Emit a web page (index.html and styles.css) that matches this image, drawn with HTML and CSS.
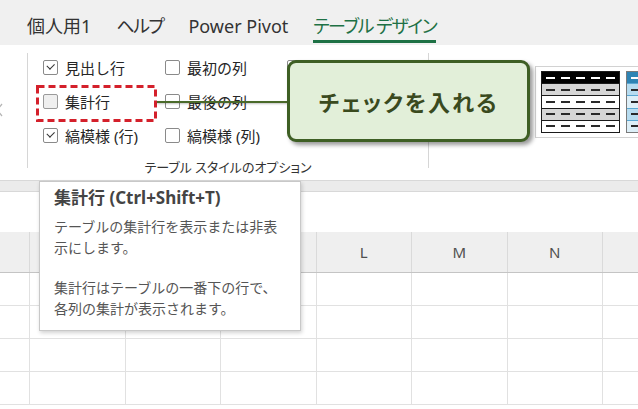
FILE: index.html
```html
<!DOCTYPE html>
<html lang="ja">
<head>
  <meta charset="UTF-8" />
  <title>テーブル デザイン - 集計行</title>
  <link rel="stylesheet" href="styles.css">
</head>
<body>
  <div class="page">

    <!-- Ribbon tabs -->
    <div class="tabbar">
      <span class="tab">個人用1</span>
      <span class="tab kana">ヘルプ</span>
      <span class="tab">Power Pivot</span>
      <span class="tab kana active">テーブル デザイン</span>
    </div>

    <!-- Ribbon body -->
    <div class="ribbon">
      <div class="scroll-left">
        <svg width="8" height="14" viewBox="0 0 8 14"><path d="M6 1 L1 7 L6 13" fill="none" stroke="#b5b5b5" stroke-width="1.3"/></svg>
      </div>
      <div class="sep"></div>

      <div class="group">
        <div class="options">
          <label class="opt"><span class="box checked"></span>見出し行</label>
          <label class="opt"><span class="box"></span>最初の列</label>
          <label class="opt"><span class="box checked"></span></label>
          <label class="opt"><span class="box hover"></span>集計行</label>
          <label class="opt"><span class="box"></span>最後の列</label>
          <label class="opt"></label>
          <label class="opt"><span class="box checked"></span>縞模様 (行)</label>
          <label class="opt"><span class="box"></span>縞模様 (列)</label>
          <label class="opt"></label>
        </div>
        <div class="group-label">テーブル スタイルのオプション</div>
      </div>
      <div class="sep"></div>

      <div class="gallery">
        <div class="gallery-frame">
          <div class="thumb dark">
            <div class="trow head"></div>
            <div class="trow band"></div>
            <div class="trow"></div>
            <div class="trow band"></div>
            <div class="trow"></div>
          </div>
          <div class="thumb blue">
            <div class="trow head"></div>
            <div class="trow band"></div>
            <div class="trow"></div>
            <div class="trow band"></div>
            <div class="trow"></div>
          </div>
        </div>
      </div>
    </div>

    <!-- Sheet -->
    <div class="ribbon-edge"></div>
    <div class="formula-bar"></div>
    <div class="sheet">
      <div class="srow colhead">
        <div class="cell corner"></div>
        <div class="cell"></div>
        <div class="cell"></div>
        <div class="cell"></div>
        <div class="cell">L</div>
        <div class="cell">M</div>
        <div class="cell">N</div>
        <div class="cell"></div>
      </div>
      <div class="srow"><div class="cell rh"></div><div class="cell"></div><div class="cell"></div><div class="cell"></div><div class="cell"></div><div class="cell"></div><div class="cell"></div><div class="cell"></div></div>
      <div class="srow"><div class="cell rh"></div><div class="cell"></div><div class="cell"></div><div class="cell"></div><div class="cell"></div><div class="cell"></div><div class="cell"></div><div class="cell"></div></div>
      <div class="srow"><div class="cell rh"></div><div class="cell"></div><div class="cell"></div><div class="cell"></div><div class="cell"></div><div class="cell"></div><div class="cell"></div><div class="cell"></div></div>
      <div class="srow"><div class="cell rh"></div><div class="cell"></div><div class="cell"></div><div class="cell"></div><div class="cell"></div><div class="cell"></div><div class="cell"></div><div class="cell"></div></div>
    </div>

    <!-- Overlays -->
    <svg class="highlight" width="121" height="37" viewBox="0 0 121 37">
      <rect x="1.5" y="1.5" width="118" height="34" fill="none" stroke="#d4202b" stroke-width="3" stroke-dasharray="7 4"/>
    </svg>
    <div class="connector"></div>
    <div class="callout">チェックを入れる</div>

    <div class="tooltip">
      <div class="tip-title">集計行 (Ctrl+Shift+T)</div>
      <p>テーブルの集計行を表示または非表<br>示にします。</p>
      <p>集計行はテーブルの一番下の行で、<br>各列の集計が表示されます。</p>
    </div>

  </div>
</body>
</html>
```

FILE: styles.css
```css
* {
  box-sizing: border-box;
  margin: 0;
  padding: 0;
}

body {
  width: 638px;
  height: 409px;
  overflow: hidden;
  background: #fff;
  font-family: 'Noto Sans', 'Noto Sans CJK JP', sans-serif;
  font-feature-settings: "palt";
  color: #262626;
}

.page {
  position: relative;
  width: 638px;
  height: 409px;
  overflow: hidden;
}

/* Tabs */
.tabbar {
  height: 45px;
  background: #f0f0f0;
  display: flex;
  align-items: flex-start;
  gap: 25px;
  padding-left: 27px;
  white-space: nowrap;
}

.tab {
  font-size: 18px;
  line-height: 24px;
  padding-top: 14px;
  padding-bottom: 2px;
  border-bottom: 3px solid transparent;
  color: #333;
}

.tab.kana {
  letter-spacing: -1.5px;
}

.tab.active {
  color: #1e7145;
  border-bottom-color: #1e7145;
}

/* Ribbon */
.ribbon {
  height: 135px;
  display: flex;
  background: #fff;
}

.scroll-left {
  width: 27px;
  flex: none;
  display: flex;
  align-items: center;
  padding-bottom: 6px;
  margin-left: -4px;
}

.sep {
  width: 1px;
  flex: none;
  background: #d6d6d6;
  margin: 8px 0 12px 4px;
}

.group + .sep {
  margin-left: 0;
}

.group {
  width: 400px;
  flex: none;
  padding-top: 5px;
}

.options {
  display: grid;
  grid-template-columns: repeat(3, 122px);
  grid-auto-rows: 34px;
  padding-left: 15px;
}

.opt {
  display: flex;
  align-items: center;
  gap: 7px;
  font-size: 15px;
  white-space: nowrap;
  font-feature-settings: normal;
}

.box {
  width: 15px;
  height: 15px;
  flex: none;
  border: 1px solid #8a8a8a;
  border-radius: 2px;
  background: #fff;
  position: relative;
}

.box.hover {
  background: #efefef;
  border-color: #9a9a9a;
}

.box.checked::after {
  content: '';
  position: absolute;
  left: 3px;
  top: 2px;
  width: 6px;
  height: 3.5px;
  border-left: 1.5px solid #333;
  border-bottom: 1.5px solid #333;
  transform: rotate(-45deg);
}

.group-label {
  margin-top: 6px;
  text-align: center;
  font-size: 13px;
  line-height: 18px;
  color: #333;
}

/* Table style gallery */
.gallery {
  flex: 1;
  min-width: 0;
  overflow: hidden;
  padding: 21px 0 0 106px;
}

.gallery-frame {
  height: 72px;
  border: 1px solid #d2d2d2;
  border-right: none;
  display: flex;
  gap: 6px;
  padding: 4px 0 0 5px;
}

.thumb {
  width: 79px;
  height: 62px;
  flex: none;
  border: 1px solid #1a1a1a;
  display: flex;
  flex-direction: column;
}

.trow {
  flex: 1;
  border-top: 1px solid #1a1a1a;
  background: repeating-linear-gradient(90deg, #2a2a2a 0 9px, transparent 9px 15px) center / calc(100% - 8px) 2px no-repeat, #fff;
}

.trow.band {
  background: repeating-linear-gradient(90deg, #2a2a2a 0 9px, transparent 9px 15px) center / calc(100% - 8px) 2px no-repeat, #d6d6d6;
}

.trow.head {
  border-top: none;
  background: repeating-linear-gradient(90deg, #fff 0 9px, transparent 9px 15px) center / calc(100% - 8px) 2px no-repeat, #000;
}

.thumb.blue {
  border-color: #7a7a7a;
}

.thumb.blue .trow {
  border-top-color: #5aa7d2;
  background: repeating-linear-gradient(90deg, #2a2a2a 0 9px, transparent 9px 15px) center / calc(100% - 8px) 2px no-repeat, #ddeff8;
}

.thumb.blue .trow.band {
  background: repeating-linear-gradient(90deg, #2a2a2a 0 9px, transparent 9px 15px) center / calc(100% - 8px) 2px no-repeat, #b7dcf0;
}

.thumb.blue .trow.head {
  background: repeating-linear-gradient(90deg, #fff 0 9px, transparent 9px 15px) center / calc(100% - 8px) 2px no-repeat, #2f84b4;
}

/* Sheet */
.ribbon-edge {
  height: 12px;
  background: #ebebeb;
  border-top: 1px solid #d8d8d8;
  border-bottom: 1px solid #d8d8d8;
}

.formula-bar {
  height: 40px;
  background: #fff;
}

.srow {
  display: grid;
  grid-template-columns: 30px repeat(7, 95.5px);
  height: 33px;
  border-bottom: 1px solid #e1e1e1;
}

.cell {
  border-right: 1px solid #e1e1e1;
}

.srow.colhead {
  height: 41px;
  background: #efefef;
  border-bottom: 1px solid #c4c4c4;
}

.colhead .cell {
  display: flex;
  align-items: center;
  justify-content: center;
  font-size: 15px;
  color: #505050;
  border-right-color: #dadada;
}

/* Overlays */
.highlight {
  position: absolute;
  left: 36px;
  top: 85px;
}

.connector {
  position: absolute;
  left: 157px;
  top: 101px;
  width: 131px;
  height: 2px;
  background: #4a6a2a;
  box-shadow: 0 1px 2px rgba(0, 0, 0, 0.25);
}

.callout {
  position: absolute;
  left: 287px;
  top: 60px;
  width: 243px;
  height: 82px;
  border: 3px solid #3e5f24;
  border-radius: 9px;
  background: #e2efd9;
  box-shadow: 3px 3px 4px rgba(0, 0, 0, 0.4);
  display: flex;
  align-items: center;
  justify-content: center;
  font-size: 22px;
  font-weight: bold;
  letter-spacing: 2px;
  color: #3a4a1e;
}

.tooltip {
  position: absolute;
  left: 39px;
  top: 181px;
  width: 262px;
  height: 150px;
  background: #fff;
  border: 1px solid #c8c8c8;
  box-shadow: 1px 2px 4px rgba(0, 0, 0, 0.18);
  padding: 6px 14px;
  color: #555;
  font-feature-settings: normal;
}

.tip-title {
  font-size: 17px;
  font-weight: bold;
  line-height: 20px;
  color: #444;
  margin-bottom: 9px;
}

.tooltip p {
  font-size: 14px;
  line-height: 20.5px;
  margin-bottom: 20px;
}
```
